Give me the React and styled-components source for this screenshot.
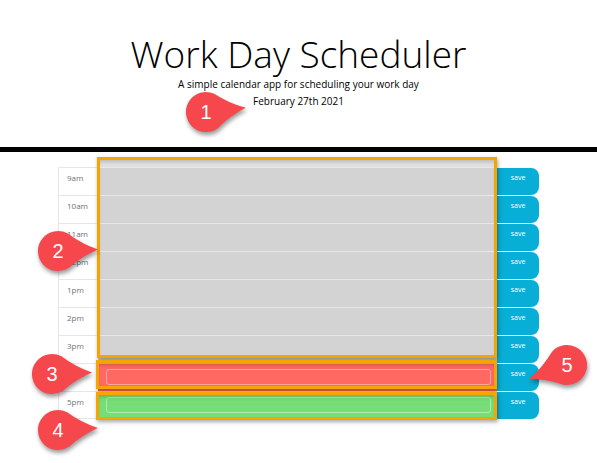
import React from 'react';
import styled, { createGlobalStyle } from 'styled-components';

const GlobalStyle = createGlobalStyle`
  body {
    margin: 0;
    background: #ffffff;
    font-family: "Open Sans", "Liberation Sans", sans-serif;
  }
`;

const hours = [
  { label: '9am', state: 'past' },
  { label: '10am', state: 'past' },
  { label: '11am', state: 'past' },
  { label: '12pm', state: 'past' },
  { label: '1pm', state: 'past' },
  { label: '2pm', state: 'past' },
  { label: '3pm', state: 'past' },
  { label: '4pm', state: 'present' },
  { label: '5pm', state: 'future' },
];

const stateColors = {
  past: '#d3d3d3',
  present: '#ff6961',
  future: '#77dd77',
};

// callout pins drawn over the screenshot
const markers = [
  { n: 1, x: 206, y: 112, angle: -6 },
  { n: 2, x: 58, y: 251, angle: -2 },
  { n: 3, x: 52, y: 374, angle: -2 },
  { n: 4, x: 58, y: 430, angle: -3 },
  { n: 5, x: 567, y: 365, angle: 160 },
];

const Page = styled.div`
  position: relative;
  width: 597px;
  height: 463px;
  overflow: hidden;
`;

const Jumbotron = styled.header`
  height: 152px;
  border-bottom: 5px solid #000;
  padding-top: 34px;
  box-sizing: border-box;
  text-align: center;
  color: #000;
`;

const Title = styled.h1`
  margin: 0;
  font-weight: 300;
  font-size: 37px;
  line-height: 40px;
`;

const Lead = styled.p`
  margin: ${p => p.$gap}px 0 0;
  font-size: 10px;
  line-height: 14px;
`;

const Planner = styled.div`
  width: 481px;
  margin: 15px auto 0;
`;

const Row = styled.div`
  display: grid;
  grid-template-columns: 40px 399px 42px;
  height: 28px;
`;

const Hour = styled.div`
  border-top: 1px solid #e4e7ea;
  border-left: 1px solid #e4e7ea;
  border-bottom: ${p => (p.$last ? '1px solid #e4e7ea' : 'none')};
  padding: 4px 0 0 8px;
  font-size: 8px;
  line-height: 11px;
  color: #6c727b;
`;

const Block = styled.div`
  background: ${p => stateColors[p.$state]};
  border-top: 1px solid rgba(255, 255, 255, 0.45);
  padding: ${p => (p.$state === 'past' ? '0' : '5px 6px 6px 8px')};
  box-sizing: border-box;
`;

const Note = styled.div`
  height: 100%;
  border: 1px solid rgba(255, 255, 255, 0.4);
  border-radius: 3px;
  box-sizing: border-box;
`;

const SaveBtn = styled.button`
  margin-top: 1px;
  height: 27px;
  border: none;
  border-radius: 0 8px 8px 0;
  background: #08aed6;
  color: #fff;
  font-family: "Open Sans", sans-serif;
  font-size: 7px;
  line-height: 9px;
  padding: 5px 0 0;
  display: flex;
  justify-content: center;
  align-items: flex-start;
`;

const Frame = styled.div`
  position: absolute;
  left: ${p => p.$x}px;
  top: ${p => p.$y}px;
  width: ${p => p.$w}px;
  height: ${p => p.$h}px;
  border: 3px solid #f6a400;
  box-sizing: border-box;
  background: ${p => (p.$band ? 'linear-gradient(#e2e2e2 7px, transparent 7px)' : 'transparent')};
  box-shadow: 1px 2px 4px rgba(0, 0, 0, 0.35), inset 0 4px 4px -2px rgba(0, 0, 0, 0.18);
`;

const Pin = styled.div`
  position: absolute;
  left: ${p => p.$x - 25}px;
  top: ${p => p.$y - 25}px;
  width: 50px;
  height: 50px;
`;

const PinShape = styled.svg`
  position: absolute;
  left: 0;
  top: 0;
  overflow: visible;
  filter: drop-shadow(1px 3px 2px rgba(0, 0, 0, 0.4));
`;

const PinNumber = styled.span`
  position: absolute;
  inset: 0;
  display: flex;
  align-items: center;
  justify-content: center;
  color: #fff;
  font-family: "Liberation Sans", Arial, sans-serif;
  font-size: 20px;
`;

function Marker({ n, x, y, angle }) {
  return (
    <Pin $x={x} $y={y}>
      <PinShape width="50" height="50" viewBox="-25 -25 50 50">
        <path
          transform={`rotate(${angle})`}
          d="M40 0 Q24 -6 10 -17.3 A20 20 0 1 0 10 17.3 Q24 6 40 0 Z"
          fill="#f5474c"
        />
      </PinShape>
      <PinNumber>{n}</PinNumber>
    </Pin>
  );
}

export default function App() {
  return (
    <Page>
      <GlobalStyle />
      <Jumbotron>
        <Title>Work Day Scheduler</Title>
        <Lead $gap={3}>A simple calendar app for scheduling your work day</Lead>
        <Lead $gap={3}>February 27th 2021</Lead>
      </Jumbotron>
      <Planner>
        {hours.map((h, i) => (
          <Row key={h.label}>
            <Hour $last={i === hours.length - 1}>{h.label}</Hour>
            <Block $state={h.state}>{h.state !== 'past' && <Note />}</Block>
            <SaveBtn>save</SaveBtn>
          </Row>
        ))}
      </Planner>
      <Frame $x={97} $y={157} $w={400} $h={201} $band />
      <Frame $x={96} $y={360} $w={401} $h={29} />
      <Frame $x={96} $y={392} $w={401} $h={28} />
      {markers.map(m => (
        <Marker key={m.n} {...m} />
      ))}
    </Page>
  );
}
